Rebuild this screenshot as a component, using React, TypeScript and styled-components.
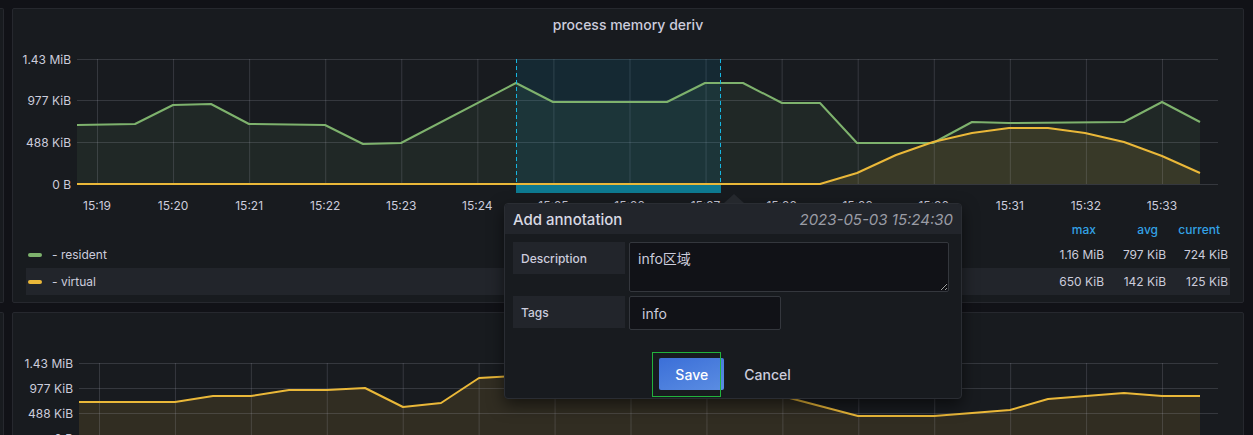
import React from 'react';
import styled, { createGlobalStyle } from 'styled-components';

const Global = createGlobalStyle`
  html, body { margin: 0; padding: 0; background: #111217; }
  body {
    font-family: Inter, "Noto Sans CJK SC", sans-serif;
    color: #ccccdc;
    overflow: hidden;
  }
`;

const Page = styled.div`
  position: relative;
  width: 1253px;
  height: 435px;
  overflow: hidden;
  box-sizing: border-box;
  padding-top: 8px;
  background: #111217;
  display: grid;
  grid-template-columns: 4px 1232px;
  grid-template-rows: 295px 200px;
  column-gap: 8px;
  row-gap: 9px;
`;

const Panel = styled.section`
  background: #181b1f;
  border: 1px solid #26282e;
  border-radius: 2px;
  box-sizing: border-box;
  overflow: hidden;
  display: flex;
  flex-direction: column;
`;

const StubPanel = styled(Panel)`
  border-left: none;
  border-radius: 0 2px 2px 0;
`;

const PanelTitle = styled.h2`
  margin: 0;
  height: 31px;
  flex: none;
  display: flex;
  align-items: center;
  justify-content: center;
  font-size: 14px;
  font-weight: 500;
  color: #ccccdc;
`;

const ChartSvg = styled.svg`
  display: block;
  flex: none;
  font-family: Inter, sans-serif;
  font-size: 12px;
`;

const Legend = styled.div`
  padding: 0 13px;
  display: flex;
  flex-direction: column;
`;

const LegendGrid = styled.div<{ $highlight?: boolean; $header?: boolean }>`
  display: grid;
  grid-template-columns: 1fr 62px 62px 62px;
  align-items: center;
  height: ${(p) => (p.$header ? '23px' : '27px')};
  background: ${(p) => (p.$highlight ? '#22252b' : 'transparent')};
  font-size: 12px;
`;

const HeadCell = styled.div`
  text-align: right;
  padding-right: 10px;
  color: #33a2e5;
  font-weight: 500;
`;

const ValueCell = styled.div`
  text-align: right;
  padding-right: 2px;
  color: #ccccdc;
  white-space: nowrap;
`;

const SeriesName = styled.div`
  display: flex;
  align-items: center;
  gap: 10px;
  padding-left: 2px;
`;

const Swatch = styled.span<{ $color: string }>`
  width: 14px;
  height: 4px;
  border-radius: 2px;
  background: ${(p) => p.$color};
`;

const Popover = styled.div`
  position: absolute;
  left: 504px;
  top: 203px;
  width: 458px;
  height: 196px;
  box-sizing: border-box;
  background: #181b1f;
  border: 1px solid #2a2d33;
  border-radius: 4px;
  box-shadow: 0 6px 16px rgba(0, 0, 0, 0.55);
  display: flex;
  flex-direction: column;
  z-index: 2;
`;

const Arrow = styled.span`
  position: absolute;
  top: -10px;
  left: 219px;
  width: 0;
  height: 0;
  border-left: 10px solid transparent;
  border-right: 10px solid transparent;
  border-bottom: 9px solid #25282d;
`;

const PopHeader = styled.header`
  height: 30px;
  flex: none;
  display: flex;
  align-items: center;
  justify-content: space-between;
  padding: 0 8px;
  background: #22252b;
  border-radius: 3px 3px 0 0;
`;

const PopTitle = styled.span`
  font-size: 15px;
  font-weight: 500;
  color: #d8d9e3;
`;

const PopTime = styled.span`
  font-size: 15px;
  font-style: italic;
  color: #9a9ca5;
`;

const PopBody = styled.div`
  flex: 1;
  display: flex;
  flex-direction: column;
  gap: 4px;
  padding: 8px 8px 8px;
  position: relative;
`;

const FieldRow = styled.div`
  display: flex;
  gap: 4px;
  align-items: flex-start;
`;

const FieldLabel = styled.label`
  width: 112px;
  height: 32px;
  box-sizing: border-box;
  display: flex;
  align-items: center;
  padding: 0 8px;
  background: #22252b;
  font-size: 12px;
  font-weight: 500;
  color: #ccccdc;
`;

const TextArea = styled.textarea`
  width: 320px;
  height: 50px;
  box-sizing: border-box;
  margin: 0;
  padding: 7px 8px;
  background: #111217;
  border: 1px solid #34373d;
  border-radius: 2px;
  color: #ccccdc;
  font-family: Inter, "Noto Sans CJK SC", sans-serif;
  font-size: 14px;
  line-height: 18px;
  resize: both;
  outline: none;
`;

const TextInput = styled.input`
  width: 152px;
  height: 34px;
  box-sizing: border-box;
  margin: 0;
  padding: 0 12px;
  background: #111217;
  border: 1px solid #34373d;
  border-radius: 2px;
  color: #ccccdc;
  font-family: Inter, sans-serif;
  font-size: 14px;
  outline: none;
`;

const ButtonRow = styled.div`
  margin-top: auto;
  display: flex;
  justify-content: center;
  gap: 4px;
`;

const PrimaryButton = styled.button`
  width: 65px;
  height: 32px;
  border: none;
  border-radius: 2px;
  background: linear-gradient(160deg, #3b6fd8 0%, #5b8de2 100%);
  color: #ffffff;
  font-family: Inter, sans-serif;
  font-size: 14px;
  font-weight: 500;
  cursor: pointer;
`;

const GhostButton = styled.button`
  height: 32px;
  padding: 0 16px;
  border: none;
  background: transparent;
  color: #ccccdc;
  font-family: Inter, sans-serif;
  font-size: 14px;
  font-weight: 500;
  cursor: pointer;
`;

const FocusRing = styled.span`
  position: absolute;
  left: 147px;
  top: 118px;
  width: 67px;
  height: 43px;
  border: 1px solid #22b23c;
  pointer-events: none;
`;

type Pt = [number, number];
const toPath = (pts: Pt[]) => pts.map((p, i) => `${i ? 'L' : 'M'}${p[0]} ${p[1]}`).join(' ');
const toArea = (pts: Pt[], base: number) =>
  `${toPath(pts)} L${pts[pts.length - 1][0]} ${base} L${pts[0][0]} ${base} Z`;

const GREEN = '#7eb26d';
const YELLOW = '#eab839';
const GRID = 'rgba(204,204,220,0.17)';

const timeLabels = ['15:19', '15:20', '15:21', '15:22', '15:23', '15:24', '15:25', '15:26', '15:27', '15:28', '15:29', '15:30', '15:31', '15:32', '15:33'];
const yLabels = ['1.43 MiB', '977 KiB', '488 KiB', '0 B'];

const topResident: Pt[] = [
  [77, 125], [135, 124], [173, 105], [211, 104], [249, 124], [325, 125], [363, 144], [401, 143],
  [516, 83], [553, 102], [667, 102], [705, 83], [743, 83], [782, 103], [820, 103], [857, 143],
  [933, 143], [972, 122], [1009, 123], [1124, 122], [1162, 102], [1200, 122],
];
const topVirtual: Pt[] = [
  [77, 184], [820, 184], [857, 173], [896, 155], [933, 142], [972, 133], [1009, 128], [1048, 128],
  [1085, 133], [1124, 142], [1162, 156], [1200, 173],
];
const bottomSeries: Pt[] = [
  [79, 402], [175, 402], [213, 396], [251, 396], [289, 390], [327, 390], [365, 388], [403, 407],
  [441, 403], [479, 378], [517, 376], [555, 376], [631, 375], [707, 376], [745, 378], [782, 396],
  [858, 416], [934, 416], [1010, 410], [1048, 399], [1086, 396], [1124, 393], [1162, 396], [1200, 396],
];

type Series = { pts: Pt[]; color: string; fillOpacity: number };

type GridProps = {
  left: number;
  right: number;
  rows: number[];
  colStart: number;
  colStep: number;
  base: number;
  labelX: number;
  series: Series[];
  timeY?: number;
};

const PlotLayers: React.FC<GridProps & { children?: React.ReactNode }> = ({
  left, right, rows, colStart, colStep, base, labelX, series, timeY, children,
}) => {
  const cols = timeLabels.map((_, i) => colStart + colStep * i);
  const top = rows[0];
  return (
    <g>
      {series.map((s, i) => (
        <path key={`f${i}`} d={toArea(s.pts, base)} fill={s.color} fillOpacity={s.fillOpacity} />
      ))}
      {rows.map((y) => (
        <line key={`h${y}`} x1={left} x2={right} y1={y + 0.5} y2={y + 0.5} stroke={GRID} strokeWidth={1} />
      ))}
      {cols.map((x) => (
        <line key={`v${x}`} x1={x + 0.5} x2={x + 0.5} y1={top} y2={Math.min(base, rows[rows.length - 1])} stroke={GRID} strokeWidth={1} />
      ))}
      {children}
      {series.map((s, i) => (
        <path key={`l${i}`} d={toPath(s.pts)} fill="none" stroke={s.color} strokeWidth={2} strokeLinejoin="round" />
      ))}
      {rows.map((y, i) => (
        <text key={`y${y}`} x={labelX} y={y + 4.5} textAnchor="end" fill="#ccccdc">
          {yLabels[i]}
        </text>
      ))}
      {timeY !== undefined &&
        cols.map((x, i) => (
          <text key={`t${x}`} x={x} y={timeY} textAnchor="middle" fill="#ccccdc">
            {timeLabels[i]}
          </text>
        ))}
    </g>
  );
};

const legendRows = [
  { name: '- resident', color: GREEN, max: '1.16 MiB', avg: '797 KiB', current: '724 KiB' },
  { name: '- virtual', color: YELLOW, max: '650 KiB', avg: '142 KiB', current: '125 KiB' },
];

export default function App() {
  return (
    <>
      <Global />
      <Page>
        <StubPanel />
        <Panel>
          <PanelTitle>process memory deriv</PanelTitle>
          <ChartSvg width={1230} height={178} viewBox="13 40 1230 178">
            <PlotLayers
              left={77}
              right={1218}
              rows={[59, 100, 142, 184]}
              colStart={97}
              colStep={76.07}
              base={184}
              labelX={71}
              timeY={210}
              series={[
                { pts: topResident, color: GREEN, fillOpacity: 0.09 },
                { pts: topVirtual, color: YELLOW, fillOpacity: 0.12 },
              ]}
            >
              <rect x={516} y={59} width={205} height={125} fill="rgb(0,152,198)" fillOpacity={0.12} />
            </PlotLayers>
            <line x1={516.5} x2={516.5} y1={59} y2={185} stroke="#17b6e0" strokeWidth={1} strokeDasharray="4 3" />
            <line x1={720.5} x2={720.5} y1={59} y2={185} stroke="#17b6e0" strokeWidth={1} strokeDasharray="4 3" />
            <rect x={516} y={185} width={205} height={8} fill="#0e7a91" />
          </ChartSvg>
          <Legend>
            <LegendGrid $header>
              <div />
              <HeadCell>max</HeadCell>
              <HeadCell>avg</HeadCell>
              <HeadCell>current</HeadCell>
            </LegendGrid>
            {legendRows.map((r, i) => (
              <LegendGrid key={r.name} $highlight={i === 1}>
                <SeriesName>
                  <Swatch $color={r.color} />
                  {r.name}
                </SeriesName>
                <ValueCell>{r.max}</ValueCell>
                <ValueCell>{r.avg}</ValueCell>
                <ValueCell>{r.current}</ValueCell>
              </LegendGrid>
            ))}
          </Legend>
        </Panel>
        <StubPanel />
        <Panel>
          <ChartSvg width={1230} height={130} viewBox="13 313 1230 130">
            <PlotLayers
              left={79}
              right={1218}
              rows={[363, 388, 413, 438]}
              colStart={99}
              colStep={75.93}
              base={450}
              labelX={73}
              series={[{ pts: bottomSeries, color: YELLOW, fillOpacity: 0.12 }]}
            />
          </ChartSvg>
        </Panel>
        <Popover>
          <Arrow />
          <PopHeader>
            <PopTitle>Add annotation</PopTitle>
            <PopTime>2023-05-03 15:24:30</PopTime>
          </PopHeader>
          <PopBody>
            <FieldRow>
              <FieldLabel>Description</FieldLabel>
              <TextArea readOnly defaultValue="info区域" />
            </FieldRow>
            <FieldRow>
              <FieldLabel>Tags</FieldLabel>
              <TextInput readOnly defaultValue="info" />
            </FieldRow>
            <ButtonRow>
              <PrimaryButton>Save</PrimaryButton>
              <GhostButton>Cancel</GhostButton>
            </ButtonRow>
            <FocusRing />
          </PopBody>
        </Popover>
      </Page>
    </>
  );
}
